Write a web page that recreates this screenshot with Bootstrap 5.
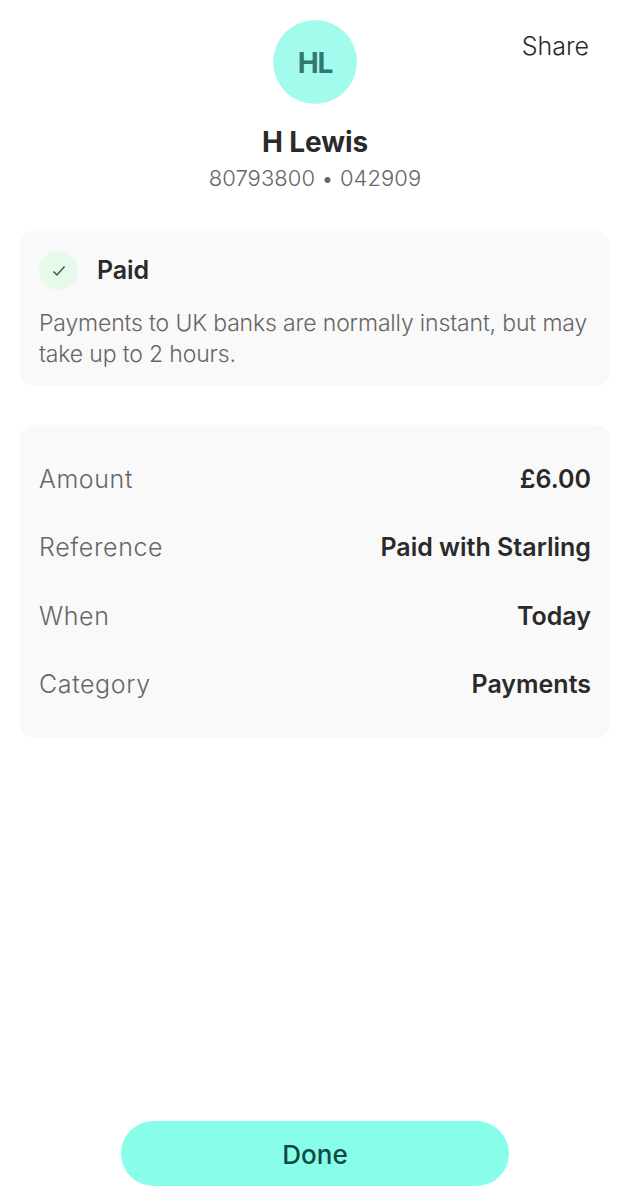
<!DOCTYPE html>
<html lang="en">
<head>
  <meta charset="UTF-8" />
  <title>Payment</title>
  <link href="https://cdn.jsdelivr.net/npm/bootstrap@5.3.0/dist/css/bootstrap.min.css" rel="stylesheet">
  <script src="https://cdn.jsdelivr.net/npm/bootstrap@5.3.0/dist/js/bootstrap.bundle.min.js"></script>
  <style>
    html, body { height: 100%; }
    body { font-family: "Inter", "Liberation Sans", sans-serif; color: #2a2a2a; background: #fff; overflow: hidden; }
    .page-wrap { height: 1199px; padding: 20px 20px 13px; }
    .share-link { top: 30px; right: 41px; font-size: 25px; line-height: 32px; color: #2a2a2a; font-weight: 300; }
    .avatar-circle { width: 84px; height: 84px; background: #a3fbee; color: #32786b; font-size: 28px; font-weight: 700; letter-spacing: -1px; padding-top: 2px; }
    .payee-name { font-size: 28px; line-height: 36px; font-weight: 700; margin-top: 20px; letter-spacing: -.1px; }
    .payee-acc { font-size: 22px; line-height: 30px; color: #666; margin-top: 3px; font-weight: 300; font-variant-numeric: normal; letter-spacing: .05px; }
    .panel-grey { background: #f9f9f9; border-radius: 14px; padding: 0 19px; }
    .status-panel { margin-top: 38px; height: 155px; padding-top: 20px; }
    .tick-circle { width: 39px; height: 39px; background: #e6f9ea; }
    .status-text { font-size: 25px; font-weight: 600; margin-left: 19px; letter-spacing: -.1px; padding-top: 1px; }
    .status-note { font-size: 23px; line-height: 31px; color: #666; margin-top: 18px; letter-spacing: -.15px; font-weight: 300; }
    .detail-panel { margin-top: 39px; height: 313px; padding-top: 20px; }
    .detail-row { height: 68.5px; font-size: 25px; }
    .detail-label { color: #666; font-weight: 300; letter-spacing: .6px; }
    .detail-value { font-weight: 600; }
    .done-btn { width: 388px; height: 65px; background: #88fdea; color: #0f4a42; font-size: 26px; font-weight: 500; border-radius: 33px; border: 0; padding-top: 8px; }
  </style>
</head>
<body>
  <div class="page-wrap d-flex flex-column position-relative">
    <div class="share-link position-absolute">Share</div>
    <div class="text-center">
      <div class="avatar-circle rounded-circle d-flex align-items-center justify-content-center mx-auto">HL</div>
      <div class="payee-name">H Lewis</div>
      <div class="payee-acc">80793800 &bull; 042909</div>
    </div>

    <div class="panel-grey status-panel">
      <div class="d-flex align-items-center">
        <div class="tick-circle rounded-circle d-flex align-items-center justify-content-center">
          <svg width="14" height="12" viewBox="0 0 14 12" fill="none" stroke="#2f5f46" stroke-width="1.5"><path d="M1.5 6.5 5 10 12.5 1.5"/></svg>
        </div>
        <div class="status-text">Paid</div>
      </div>
      <div class="status-note">Payments to UK banks are normally instant, but may take up to 2 hours.</div>
    </div>

    <div class="panel-grey detail-panel">
      <div class="detail-row d-flex justify-content-between align-items-center"><span class="detail-label">Amount</span><span class="detail-value">&pound;6.00</span></div>
      <div class="detail-row d-flex justify-content-between align-items-center"><span class="detail-label">Reference</span><span class="detail-value">Paid with Starling</span></div>
      <div class="detail-row d-flex justify-content-between align-items-center"><span class="detail-label">When</span><span class="detail-value">Today</span></div>
      <div class="detail-row d-flex justify-content-between align-items-center"><span class="detail-label">Category</span><span class="detail-value">Payments</span></div>
    </div>

    <div class="mt-auto text-center">
      <button class="btn done-btn">Done</button>
    </div>
  </div>
</body>
</html>
